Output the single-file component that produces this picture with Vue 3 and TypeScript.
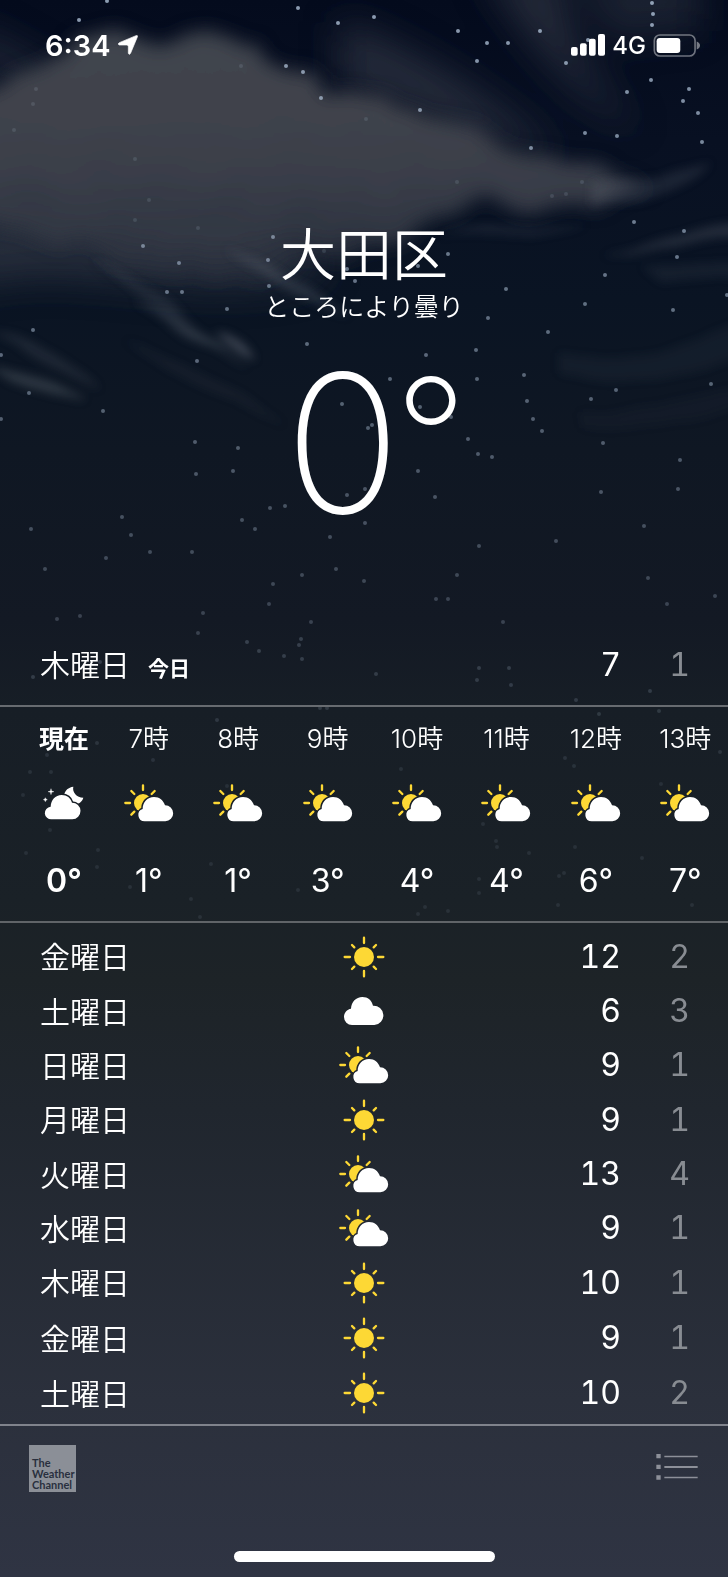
<script setup lang="ts">
type Condition = 'sun' | 'cloud' | 'partly' | 'night'

interface Hour {
  label: string
  icon: Condition
  temp: number
}

interface Day {
  name: string
  icon: Condition
  high: number
  low: number
}

const hours: Hour[] = [
  { label: '現在', icon: 'night', temp: 0 },
  { label: '7時', icon: 'partly', temp: 1 },
  { label: '8時', icon: 'partly', temp: 1 },
  { label: '9時', icon: 'partly', temp: 3 },
  { label: '10時', icon: 'partly', temp: 4 },
  { label: '11時', icon: 'partly', temp: 4 },
  { label: '12時', icon: 'partly', temp: 6 },
  { label: '13時', icon: 'partly', temp: 7 },
]

const days: Day[] = [
  { name: '金曜日', icon: 'sun', high: 12, low: 2 },
  { name: '土曜日', icon: 'cloud', high: 6, low: 3 },
  { name: '日曜日', icon: 'partly', high: 9, low: 1 },
  { name: '月曜日', icon: 'sun', high: 9, low: 1 },
  { name: '火曜日', icon: 'partly', high: 13, low: 4 },
  { name: '水曜日', icon: 'partly', high: 9, low: 1 },
  { name: '木曜日', icon: 'sun', high: 10, low: 1 },
  { name: '金曜日', icon: 'sun', high: 9, low: 1 },
  { name: '土曜日', icon: 'sun', high: 10, low: 2 },
]

const conditionNames: Record<Condition, string> = {
  sun: '晴れ',
  cloud: '曇り',
  partly: '晴れ時々曇り',
  night: 'ところにより曇り',
}

// Star positions on the sky canvas; stars fade towards the horizon.
const stars: [number, number][] = [
  [107, 1], [79, 20], [298, 8], [338, 23], [286, 66], [303, 72], [321, 98],
  [374, 17], [458, 31], [487, 43], [508, 43], [477, 61], [540, 31], [588, 40],
  [652, 3], [653, 14], [652, 25], [566, 63], [651, 80], [627, 92], [689, 89],
  [683, 101], [698, 113], [702, 142], [585, 133], [617, 136], [420, 110],
  [531, 148], [634, 222], [684, 231], [677, 257], [605, 275], [448, 254],
  [506, 289], [727, 295], [143, 246], [179, 263], [167, 292], [182, 292],
  [273, 237], [268, 260], [269, 286], [347, 269], [355, 281], [418, 266],
  [227, 309], [488, 318], [307, 344], [426, 355], [476, 350], [390, 379],
  [477, 379], [524, 375], [342, 404], [420, 407], [451, 417], [527, 401],
  [372, 425], [368, 428], [468, 439], [478, 454], [492, 457], [418, 471],
  [238, 448], [233, 471], [365, 489], [347, 495], [435, 497], [285, 506],
  [270, 508], [242, 520], [255, 529], [365, 523], [330, 537], [33, 330],
  [1, 355], [29, 393], [1, 419], [103, 411], [197, 361], [196, 474],
  [195, 442], [585, 304], [673, 310], [548, 332], [616, 390], [591, 399],
  [711, 384], [533, 419], [542, 431], [603, 443], [680, 460], [678, 489],
  [601, 492], [644, 526], [556, 541], [479, 546], [122, 517], [31, 529],
  [131, 535], [150, 552], [192, 552], [106, 558], [45, 569], [302, 575],
  [336, 569], [364, 581], [273, 584], [457, 575], [648, 578], [715, 596],
  [436, 599], [448, 599], [667, 604], [269, 604], [203, 613], [80, 616],
  [57, 619], [311, 622], [503, 622], [198, 633], [247, 642], [301, 639],
  [299, 645], [259, 651], [284, 656], [302, 659], [33, 677], [100, 662],
  [320, 708], [327, 708], [217, 720], [97, 743], [47, 755], [51, 772],
  [30, 772], [153, 760], [23, 795], [227, 786], [50, 830], [98, 850],
  [26, 853], [97, 867], [211, 864], [130, 887], [191, 899], [298, 890],
  [200, 917], [376, 674], [479, 668], [477, 680], [509, 668], [511, 685],
  [576, 700], [650, 691], [599, 714], [659, 711], [565, 758], [574, 766],
  [401, 769], [720, 752], [661, 784], [483, 824], [496, 841], [497, 847],
  [529, 853], [575, 847], [642, 858], [479, 879], [479, 893], [559, 876],
  [564, 873], [425, 907], [448, 911], [692, 905], [558, 905], [418, 914],
]

const hazyStars: [number, number][] = [
  [241, 66], [36, 89], [33, 104], [14, 130], [135, 159], [149, 200],
  [135, 220], [198, 228], [457, 182], [582, 182], [566, 194], [552, 196],
  [324, 251], [366, 119],
]

const starOpacity = (y: number): number => Math.max(0.1, 0.78 - y / 1150)
</script>

<template>
  <div class="weather">
    <svg class="sky" viewBox="0 0 728 1577" preserveAspectRatio="xMidYMin slice" aria-hidden="true">
      <defs>
        <linearGradient id="cloud-fill" x1="0" y1="30" x2="0" y2="285" gradientUnits="userSpaceOnUse">
          <stop offset="0" stop-color="#41444d" />
          <stop offset="0.35" stop-color="#3f434c" />
          <stop offset="0.6" stop-color="#393d48" />
          <stop offset="0.8" stop-color="#343945" stop-opacity="0.9" />
          <stop offset="1" stop-color="#2a303d" stop-opacity="0.35" />
        </linearGradient>
        <filter id="soft-cloud" x="-20%" y="-20%" width="140%" height="140%">
          <feTurbulence type="fractalNoise" baseFrequency="0.022" numOctaves="5" seed="4" result="noise" />
          <feDisplacementMap in="SourceGraphic" in2="noise" scale="34" xChannelSelector="R" yChannelSelector="G" result="ragged" />
          <feGaussianBlur in="ragged" stdDeviation="9" />
        </filter>
        <filter id="haze" x="-50%" y="-50%" width="200%" height="200%">
          <feGaussianBlur stdDeviation="18" />
        </filter>
        <filter id="wisp" x="-10%" y="-20%" width="120%" height="140%">
          <feTurbulence type="fractalNoise" baseFrequency="0.012" numOctaves="2" seed="9" result="noise" />
          <feDisplacementMap in="SourceGraphic" in2="noise" scale="16" xChannelSelector="R" yChannelSelector="G" result="ragged" />
          <feGaussianBlur in="ragged" stdDeviation="5" />
        </filter>
        <filter id="twinkle" x="-5%" y="-5%" width="110%" height="110%">
          <feGaussianBlur stdDeviation="0.6" />
        </filter>
        <mask id="behind-day-cloud" maskUnits="userSpaceOnUse" x="0" y="0" width="150" height="114">
          <rect width="150" height="114" fill="#fff" />
          <path d="M62 112A19 19 0 0 1 56 75C56 54 70 39 90 39C107 39 118 49 123 64A24 24 0 0 1 124 112Z" fill="#000" stroke="#000" stroke-width="9" />
        </mask>
        <mask id="behind-night-cloud" maskUnits="userSpaceOnUse" x="0" y="0" width="120" height="102">
          <rect width="120" height="102" fill="#fff" />
          <path d="M23 100A19 19 0 0 1 20 62C21 42 34 27 53 27C69 27 80 36 84 50A25 25 0 0 1 85 100Z" fill="#000" stroke="#000" stroke-width="9" />
        </mask>
      </defs>
      <g filter="url(#haze)" fill="#444854">
        <path d="M480 -30L560 -30C570 30 580 70 640 130C590 110 550 60 530 40Z" opacity="0.5" />
        <path d="M340 20C420 50 500 100 560 160C490 140 400 110 340 80Z" opacity="0.5" />
        <path d="M-30 20L80 80L60 100L-30 70Z" opacity="0.35" />
        <path d="M570 -30H700V30L610 40Z" opacity="0.35" />
        <path d="M-30 200H260L330 270C220 320 60 250 -30 290Z" opacity="0.5" />
      </g>
      <path
        filter="url(#soft-cloud)"
        fill="url(#cloud-fill)"
        d="M-30 92L20 80L50 60C80 38 110 28 140 36C165 42 190 34 225 36C260 42 300 68 335 98C370 92 420 106 450 122C490 140 520 150 555 160C590 170 610 178 660 188C610 206 540 206 490 202C455 207 430 222 400 242C350 262 310 266 270 276C210 290 140 276 100 254C60 240 30 225 -30 224Z"
      />
      <g filter="url(#wisp)" fill="#737b86">
        <path d="M90 258C150 285 200 322 245 370C195 335 150 300 90 258Z" opacity="0.2" />
        <path d="M135 300C165 312 190 325 225 350C195 342 165 325 135 300Z" opacity="0.28" />
        <path d="M215 330C230 332 245 345 252 360C238 358 225 345 215 330Z" opacity="0.45" />
        <path d="M220 245C270 265 310 282 350 315C305 298 265 278 220 245Z" opacity="0.25" />
        <path d="M-10 330C30 338 60 352 100 390C60 374 30 356 -10 330Z" opacity="0.18" />
        <path d="M-10 368C30 372 55 385 85 402C50 398 20 388 -10 368Z" opacity="0.32" />
        <path d="M120 340C180 360 240 395 290 425C220 400 170 375 120 340Z" opacity="0.09" />
        <path d="M590 182C640 178 670 176 710 162C680 194 640 202 590 204Z" opacity="0.18" />
        <path d="M600 254C660 242 700 230 750 218V236C700 240 660 252 600 254Z" opacity="0.24" />
        <path d="M640 264H750V280H660Z" opacity="0.1" />
        <path d="M440 236C490 218 540 236 590 222C550 246 490 232 440 236Z" opacity="0.14" />
        <path d="M560 350C630 368 690 352 750 320V350C700 385 630 390 560 372Z" opacity="0.08" />
        <path d="M580 412C640 412 690 398 750 382V400C690 425 640 430 580 428Z" opacity="0.05" />
      </g>
      <g filter="url(#twinkle)" fill="#b4c6dc">
        <circle v-for="([x, y], i) in stars" :key="`s${i}`" :cx="x" :cy="y" r="2" :opacity="starOpacity(y)" />
        <circle v-for="([x, y], i) in hazyStars" :key="`h${i}`" :cx="x" :cy="y" r="2" opacity="0.15" />
      </g>
    </svg>

    <header class="status">
      <div class="status-side">
        <time class="clock">6:34</time>
        <svg class="location" viewBox="0 0 60 60" role="img" aria-label="位置情報">
          <path d="M54 2Q60 0 58 6L38 54Q34 62 31 55V35Q31 30 27 30H4Q-3 28 4 23Z" fill="#fff" stroke="#fff" stroke-width="2" stroke-linejoin="round" />
        </svg>
      </div>
      <div class="status-side">
        <svg class="signal" viewBox="0 0 102 66" role="img" aria-label="電波">
          <g fill="#fff">
            <rect x="0" y="39" width="20" height="26" rx="6" />
            <rect x="27" y="28" width="20" height="37" rx="6" />
            <rect x="54" y="14" width="20" height="51" rx="6" />
            <rect x="81" y="0" width="21" height="65" rx="6" />
          </g>
        </svg>
        <span class="network">4G</span>
        <svg class="battery" viewBox="0 0 144 70" role="img" aria-label="バッテリー">
          <rect x="3" y="3" width="124" height="64" rx="17" fill="none" stroke="#fff" stroke-opacity="0.42" stroke-width="5" />
          <path d="M132 23Q142 27 142 35T132 47Z" fill="#fff" fill-opacity="0.45" />
          <rect x="10" y="12" width="72" height="46" rx="10" fill="#fff" />
        </svg>
      </div>
    </header>

    <main>
      <section class="current">
        <h1 class="city">大田区</h1>
        <p class="summary">ところにより曇り</p>
        <p class="now"><span>0</span><span class="now-degree">°</span></p>
      </section>

      <section class="today">
        <h2 class="today-day">木曜日<span class="today-label">今日</span></h2>
        <span class="high">7</span>
        <span class="low">1</span>
      </section>

      <ol class="hourly">
        <li v-for="hour in hours" :key="hour.label" class="hour" :class="{ present: hour.icon === 'night' }">
          <span class="hour-label">{{ hour.label }}</span>
          <span class="hour-icon">
            <svg v-if="hour.icon === 'night'" class="icon-night" viewBox="0 0 120 102" role="img" :aria-label="conditionNames[hour.icon]">
              <path d="M88 2C84 18 98 35 118 35C114 49 102 56 90 54C72 53 60 40 61 25C63 13 73 4 88 2Z" fill="#fff" mask="url(#behind-night-cloud)" />
              <path d="M23 100A19 19 0 0 1 20 62C21 42 34 27 53 27C69 27 80 36 84 50A25 25 0 0 1 85 100Z" fill="#fff" />
              <path d="M21 8L23 15L30 17L23 19L21 26L19 19L12 17L19 15ZM4 35L6 39L10 41L6 43L4 47L2 43L-2 41L2 39Z" fill="#fff" stroke="#fff" />
            </svg>
            <svg v-else class="icon-partly" viewBox="0 0 150 114" role="img" :aria-label="conditionNames[hour.icon]">
              <g mask="url(#behind-day-cloud)">
                <circle cx="57" cy="57" r="27" fill="#fdd835" />
                <path d="M57 4V18M4 57H18M22 21L31 30M92 21L83 30M22 92L31 83" stroke="#fdd835" stroke-width="7" stroke-linecap="round" />
              </g>
              <path d="M62 112A19 19 0 0 1 56 75C56 54 70 39 90 39C107 39 118 49 123 64A24 24 0 0 1 124 112Z" fill="#fff" />
            </svg>
          </span>
          <span class="hour-temp">{{ hour.temp }}°</span>
        </li>
      </ol>

      <div class="daily">
        <table>
          <tbody>
            <tr v-for="(day, i) in days" :key="i">
              <th scope="row">{{ day.name }}</th>
              <td class="day-icon">
                <svg v-if="day.icon === 'sun'" class="icon-sun" viewBox="0 0 126 126" role="img" :aria-label="conditionNames[day.icon]">
                  <circle cx="63" cy="63" r="30" fill="#fdd835" />
                  <path d="M63 5V21M63 105V121M5 63H21M105 63H121M27 27L34 34M99 27L92 34M27 99L34 92M99 99L92 92" stroke="#fdd835" stroke-width="7" stroke-linecap="round" />
                </svg>
                <svg v-else-if="day.icon === 'cloud'" class="icon-cloud" viewBox="0 0 120 84" role="img" :aria-label="conditionNames[day.icon]">
                  <path d="M24 84A24 24 0 0 1 0 60C0 47 9 37 21 35C22 15 36 0 55 0C72 0 83 10 87 26A29 29 0 0 1 91 84Z" fill="#fff" />
                </svg>
                <svg v-else class="icon-partly" viewBox="0 0 150 114" role="img" :aria-label="conditionNames[day.icon]">
                  <g mask="url(#behind-day-cloud)">
                    <circle cx="57" cy="57" r="27" fill="#fdd835" />
                    <path d="M57 4V18M4 57H18M22 21L31 30M92 21L83 30M22 92L31 83" stroke="#fdd835" stroke-width="7" stroke-linecap="round" />
                  </g>
                  <path d="M62 112A19 19 0 0 1 56 75C56 54 70 39 90 39C107 39 118 49 123 64A24 24 0 0 1 124 112Z" fill="#fff" />
                </svg>
              </td>
              <td class="high">{{ day.high }}</td>
              <td class="low">{{ day.low }}</td>
            </tr>
          </tbody>
        </table>
      </div>
    </main>

    <footer class="toolbar">
      <div class="toolbar-row">
        <a class="provider" href="#">The<br />Weather<br />Channel</a>
        <button class="list-button" type="button" aria-label="都市リスト">
          <svg viewBox="0 0 124 78" aria-hidden="true">
            <path d="M0 0H13V13H0ZM0 32H13V45H0ZM0 64H13V77H0ZM24 5H124V10H24ZM24 36H124V42H24ZM24 68H124V73H24Z" fill="#8d9099" />
          </svg>
        </button>
      </div>
      <div class="home-indicator"></div>
    </footer>
  </div>
</template>

<style>
body {
  margin: 0;
  background: #2f3441;
}
</style>

<style scoped>
.weather {
  position: relative;
  display: flex;
  flex-direction: column;
  min-height: 100vh;
  overflow: hidden;
  color: #fff;
  font-family: Inter, "Noto Sans CJK JP", sans-serif;
  background: linear-gradient(
    #040b1d 0,
    #081022 140px,
    #0a1423 300px,
    #0f1723 450px,
    #131924 620px,
    #171e26 710px,
    #1a2127 900px,
    #1d2327 980px,
    #20262e 1110px,
    #2b303c 1400px,
    #2f3443 1577px
  );
}

.sky {
  position: absolute;
  inset: 0;
  width: 100%;
  height: 100%;
}

h1,
h2,
p,
ol {
  margin: 0;
  padding: 0;
}

main,
.status,
.toolbar {
  position: relative;
}

main {
  flex: 1;
}

.status {
  display: flex;
  justify-content: space-between;
  align-items: center;
  height: 90px;
  padding: 0 27px 0 45px;
}

.status-side {
  display: flex;
  align-items: center;
  gap: 7px;
}

.clock {
  font-size: 29px;
  font-weight: 600;
}

.location {
  width: 20px;
  height: 20px;
}

.signal {
  width: 34px;
  height: 22px;
}

.network {
  font-size: 24px;
  font-weight: 500;
}

.battery {
  width: 48px;
  height: 23px;
}

.current {
  text-align: center;
}

.city {
  padding-top: 129px;
  font-size: 56px;
  font-weight: 350;
  line-height: 72px;
}

.summary {
  font-size: 25px;
  font-weight: 350;
  line-height: 32px;
}

.now {
  display: flex;
  justify-content: center;
  height: 240px;
  padding-left: 24px;
  font-size: 192px;
  font-weight: 200;
  line-height: 240px;
}

.now-degree {
  margin-left: -6px;
  font-size: 160px;
  font-weight: 250;
  line-height: 226px;
}

.today {
  display: flex;
  align-items: center;
  height: 80px;
  margin-top: 62px;
  padding: 0 38px 0 40px;
}

.today-day {
  flex: 1;
  padding-top: 4px;
  font-size: 30px;
  font-weight: 350;
  line-height: 40px;
}

.today-label {
  margin-left: 18px;
  font-size: 21px;
  font-weight: 600;
}

.high,
.low {
  font-size: 32px;
  line-height: 40px;
  font-weight: 400;
  text-align: right;
  font-variant-numeric: tabular-nums;
}

.low {
  width: 69px;
  color: #888c92;
}

.hourly {
  display: grid;
  grid-template-columns: 80px repeat(7, 1fr);
  margin-right: -2px;
  padding: 12px 0 20px 24px;
  list-style: none;
  border-top: 2px solid #676b70;
  border-bottom: 2px solid #606468;
}

.hour {
  display: flex;
  flex-direction: column;
  align-items: center;
}

.hour-label {
  font-size: 26px;
  font-weight: 350;
  line-height: 40px;
}

.hour-icon {
  display: flex;
  align-items: center;
  height: 38px;
  margin: 25px 0 39px;
}

.hour-temp {
  font-size: 32px;
  font-weight: 400;
  line-height: 40px;
}

.hour.present .hour-label {
  font-size: 25px;
  font-weight: 700;
}

.hour.present .hour-temp {
  font-weight: 600;
}

.icon-night {
  width: 40px;
  height: 34px;
  overflow: visible;
}

.icon-partly {
  width: 50px;
  height: 38px;
}

.icon-sun {
  width: 42px;
  height: 42px;
}

.icon-cloud {
  width: 40px;
  height: 28px;
}

.daily {
  padding: 6px 38px 3px 40px;
}

table {
  width: 100%;
  height: 492px;
  border-collapse: collapse;
  table-layout: fixed;
}

th,
td {
  padding: 0;
  vertical-align: middle;
}

th {
  width: 33.2%;
  padding-top: 1px;
  font-size: 30px;
  font-weight: 350;
  line-height: 40px;
  text-align: left;
}

.day-icon {
  width: 33.2%;
}

.day-icon svg {
  display: block;
  margin: 0 auto;
}

.toolbar {
  border-top: 2px solid #80838c;
}

.toolbar-row {
  display: flex;
  justify-content: space-between;
  align-items: center;
  padding: 19px 30px 0 29px;
}

.provider {
  box-sizing: border-box;
  width: 47px;
  height: 47px;
  padding: 12px 0 0 3px;
  color: #292f3e;
  font-family: Lato, "Noto Sans", sans-serif;
  font-size: 11px;
  font-weight: 700;
  line-height: 11px;
  text-decoration: none;
  background: #8b8f97;
}

.list-button {
  display: flex;
  padding: 0 0 4px;
  border: 0;
  background: none;
}

.list-button svg {
  width: 42px;
  height: 26px;
}

.home-indicator {
  width: 261px;
  height: 11px;
  margin: 59px auto 15px;
  border-radius: 6px;
  background: #fff;
}
</style>
